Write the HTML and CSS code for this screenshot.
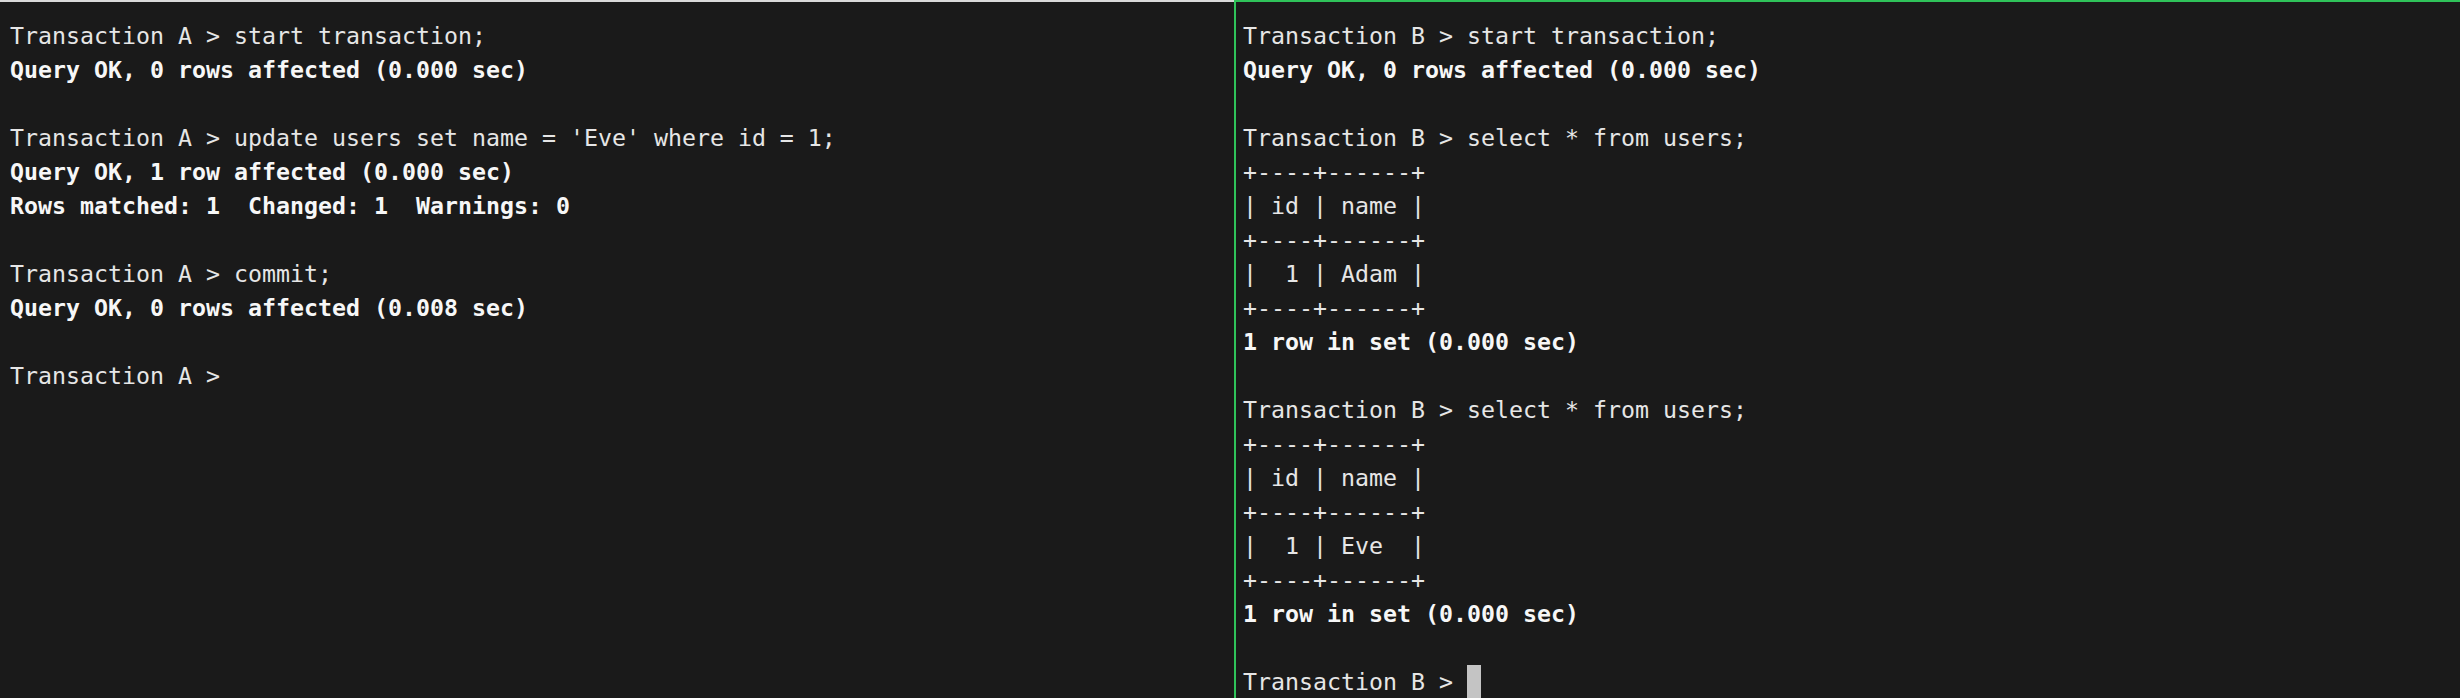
FILE: index.html
```html
<!DOCTYPE html>
<html>
<head>
<meta charset="utf-8">
<link rel="stylesheet" href="styles.css">
</head>
<body>
<div class="term">
<section class="pane pane-a">
<pre class="out">Transaction A &gt; start transaction;
<b>Query OK, 0 rows affected (0.000 sec)</b>

Transaction A &gt; update users set name = 'Eve' where id = 1;
<b>Query OK, 1 row affected (0.000 sec)</b>
<b>Rows matched: 1  Changed: 1  Warnings: 0</b>

Transaction A &gt; commit;
<b>Query OK, 0 rows affected (0.008 sec)</b>

Transaction A &gt; </pre>
</section>
<section class="pane pane-b">
<pre class="out">Transaction B &gt; start transaction;
<b>Query OK, 0 rows affected (0.000 sec)</b>

Transaction B &gt; select * from users;
+----+------+
| id | name |
+----+------+
|  1 | Adam |
+----+------+
<b>1 row in set (0.000 sec)</b>

Transaction B &gt; select * from users;
+----+------+
| id | name |
+----+------+
|  1 | Eve  |
+----+------+
<b>1 row in set (0.000 sec)</b>

Transaction B &gt; <span class="cursor"></span></pre>
</section>
</div>
</body>
</html>
```

FILE: styles.css
```css
html, body {
  margin: 0;
  padding: 0;
  background: #1a1a1a;
}
.term {
  display: flex;
  width: 2460px;
  height: 698px;
  overflow: hidden;
  background: #1a1a1a;
}
.pane {
  box-sizing: border-box;
  height: 698px;
  overflow: hidden;
}
.pane-a {
  width: 1234px;
  border-top: 2px solid #d9d9d9;
  padding: 17px 0 0 10px;
}
.pane-b {
  flex: 1;
  border-top: 2px solid #2fc35a;
  border-left: 2px solid #2fc35a;
  padding: 17px 0 0 7px;
}
.out {
  margin: 0;
  font-family: "DejaVu Sans Mono", "Liberation Mono", monospace;
  font-size: 23.25px;
  line-height: 34px;
  color: #e6e6e6;
  white-space: pre;
}
.out b {
  font-weight: bold;
  color: #f7f7f7;
}
.cursor {
  display: inline-block;
  width: 14px;
  height: 34px;
  background: #c4c4c4;
  vertical-align: top;
}
```
